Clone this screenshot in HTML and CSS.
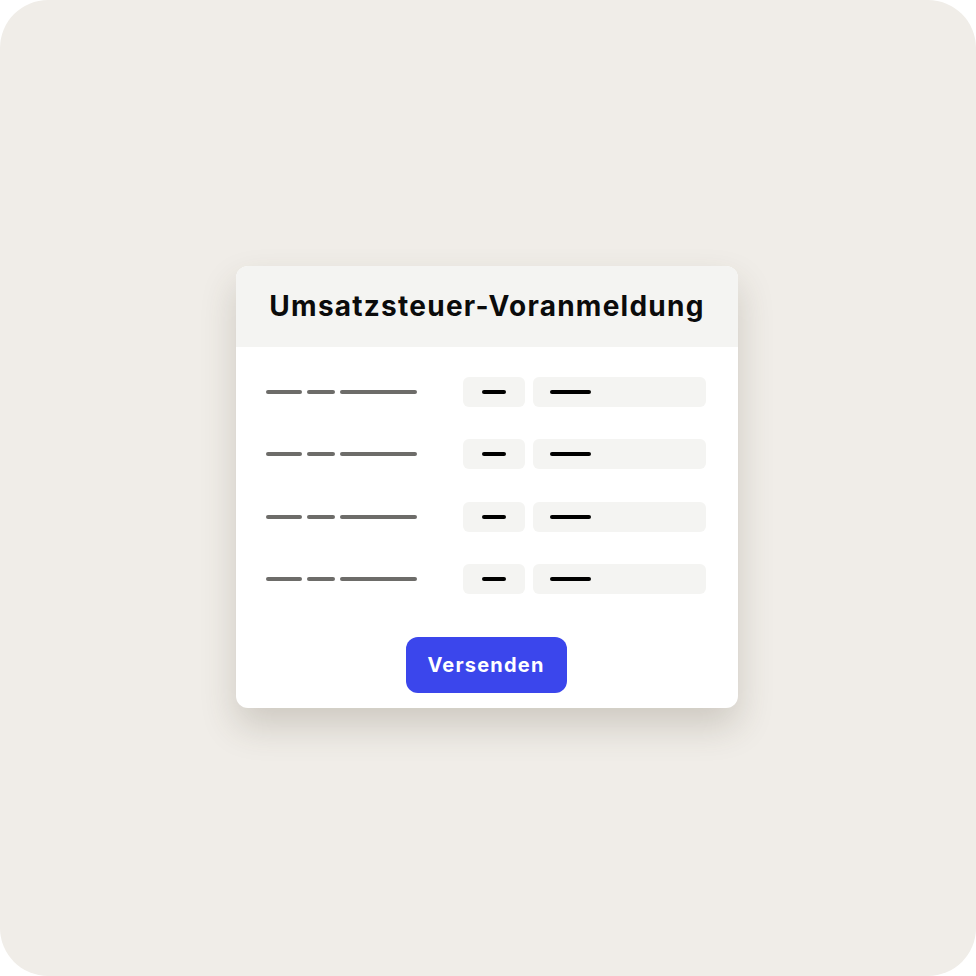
FILE: index.html
```html
<!DOCTYPE html>
<html lang="de">
<head>
<meta charset="utf-8">
<title>Umsatzsteuer-Voranmeldung</title>
<link rel="stylesheet" href="styles.css">
</head>
<body>
<div class="page">
  <div class="card">
    <div class="card-header">
      <h1 class="title">Umsatzsteuer-Voranmeldung</h1>
    </div>
    <div class="card-body">
      <div class="rows">
        <div class="row">
          <div class="label"><span class="dash d1"></span><span class="dash d2"></span><span class="dash d3"></span></div>
          <div class="field small"><span class="val v1"></span></div>
          <div class="field large"><span class="val v2"></span></div>
        </div>
        <div class="row">
          <div class="label"><span class="dash d1"></span><span class="dash d2"></span><span class="dash d3"></span></div>
          <div class="field small"><span class="val v1"></span></div>
          <div class="field large"><span class="val v2"></span></div>
        </div>
        <div class="row">
          <div class="label"><span class="dash d1"></span><span class="dash d2"></span><span class="dash d3"></span></div>
          <div class="field small"><span class="val v1"></span></div>
          <div class="field large"><span class="val v2"></span></div>
        </div>
        <div class="row">
          <div class="label"><span class="dash d1"></span><span class="dash d2"></span><span class="dash d3"></span></div>
          <div class="field small"><span class="val v1"></span></div>
          <div class="field large"><span class="val v2"></span></div>
        </div>
      </div>
      <div class="actions">
        <button class="btn">Versenden</button>
      </div>
    </div>
  </div>
</div>
</body>
</html>
```

FILE: styles.css
```css
* { box-sizing: border-box; }
html, body { margin: 0; padding: 0; background: #ffffff; }
.page {
  width: 976px;
  height: 976px;
  border-radius: 48px;
  background: #f0ede8;
  display: flex;
  align-items: center;
  justify-content: center;
  font-family: Inter, "DejaVu Sans", sans-serif;
}
.card {
  width: 502px;
  background: #ffffff;
  border-radius: 12px;
  overflow: hidden;
  box-shadow: 0 18px 36px rgba(70, 60, 40, 0.2);
  margin: -3px 0 0 -2px;
}
.card-header {
  height: 81px;
  background: #f4f4f2;
  display: flex;
  align-items: center;
  justify-content: center;
}
.title {
  margin: 0;
  font-size: 28px;
  font-weight: 700;
  letter-spacing: 1.25px;
  color: #0b0b0b;
}
.card-body {
  padding: 30px 32px 15px 30px;
}
.rows {
  display: flex;
  flex-direction: column;
  gap: 32.5px;
}
.row {
  display: flex;
  align-items: center;
  height: 30px;
}
.label {
  display: flex;
  gap: 5px;
  width: 197px;
}
.dash {
  height: 4px;
  border-radius: 2px;
  background: #6d6c69;
}
.d1 { width: 36px; }
.d2 { width: 28px; }
.d3 { width: 77px; }
.field {
  height: 30px;
  background: #f4f4f2;
  border-radius: 6px;
  display: flex;
  align-items: center;
}
.small { width: 62px; justify-content: center; margin-right: 8px; }
.large { width: 173px; padding-left: 17px; }
.val {
  height: 4px;
  border-radius: 2px;
  background: #000000;
}
.v1 { width: 24px; }
.v2 { width: 41px; }
.actions {
  display: flex;
  justify-content: center;
  margin-top: 42.5px;
}
.btn {
  width: 161px;
  height: 56px;
  border: none;
  border-radius: 12px;
  background: #3b46ec;
  color: #ffffff;
  font-family: Inter, "DejaVu Sans", sans-serif;
  font-size: 20px;
  font-weight: 700;
  letter-spacing: 1.2px;
  padding: 0;
}
```
